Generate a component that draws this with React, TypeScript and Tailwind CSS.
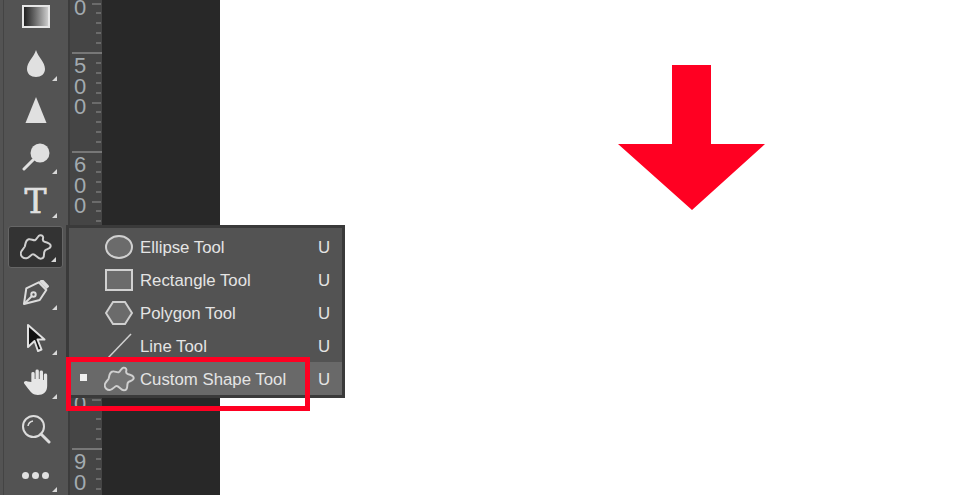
const blob =
  'M8.7 5.3C11 4.5 13.5 6.8 15.3 6C17 5.2 18 1.5 20 1.3C22.5 1 23.5 2.8 23 4.5C22.6 6 23 7.3 24.5 7.8C26.5 8.3 30.8 9.5 30.7 12C30.6 14.5 27.5 15 25.8 15.8C24 16.6 24 18.5 24 20.5C24 23 22.5 24.7 20.5 24.7C17.5 24.7 15.5 20.3 13 20.3C11 20.3 9.5 23.7 6.5 24.2C3 24.7 0.7 22 0.7 19.5C0.7 16.5 4 14.5 4.8 12.5C5.5 10.5 5.2 6.5 8.7 5.3Z';

function Corner() {
  return (
    <svg className="absolute right-[6px] bottom-[5px]" width="5" height="5" viewBox="0 0 5 5">
      <path d="M5 0V5H0Z" fill="#d8d8d8" />
    </svg>
  );
}

function ToolSlot({ className = '', active, corner, children }: { className?: string; active?: boolean; corner?: boolean; children: React.ReactNode }) {
  return (
    <div
      className={`relative flex w-[55px] shrink-0 items-center justify-center ${active ? 'h-[42px] rounded-[3px] border border-[#666] bg-[#333333]' : 'h-[44px]'} ${className}`}
    >
      {children}
      {corner && <Corner />}
    </div>
  );
}

function Toolbar() {
  return (
    <div className="flex h-full w-[70px] shrink-0 flex-col items-center overflow-hidden border-r-2 border-[#3c3c3c] bg-[#535353] pl-[3px]">
      <ToolSlot className="-mt-[6px]">
        <div className="h-[23px] w-[28px] border-2 border-[#e6e6e6] bg-gradient-to-r from-[#222] to-[#ccc]" />
      </ToolSlot>
      <ToolSlot className="mt-[4px]" corner>
        <svg width="20" height="28" viewBox="0 0 20 28">
          <path d="M10 0C12 7 19 12 19 19C19 24 15 27 10 27C5 27 1 24 1 19C1 12 8 7 10 0Z" fill="#e0e0e0" />
        </svg>
      </ToolSlot>
      <ToolSlot className="mt-[2px]">
        <svg width="22" height="26" viewBox="0 0 22 26">
          <path d="M11 0L21.5 26H0.5Z" fill="#e0e0e0" />
        </svg>
      </ToolSlot>
      <ToolSlot className="mt-[3px]" corner>
        <svg width="28" height="28" viewBox="0 0 28 28">
          <circle cx="18" cy="10" r="9.5" fill="#e0e0e0" />
          <path d="M11 17L2 26" stroke="#e0e0e0" strokeWidth="3" strokeLinecap="round" />
        </svg>
      </ToolSlot>
      <ToolSlot corner>
        <span className="font-['DejaVu_Serif',serif] text-[33px] leading-none text-[#e0e0e0] [-webkit-text-stroke:0.7px_#e0e0e0]">T</span>
      </ToolSlot>
      <ToolSlot className="mt-[3px]" active corner>
        <svg width="32" height="26" viewBox="0 0 32 26">
          <path d={blob} fill="none" stroke="#cfcfcf" strokeWidth="2" />
        </svg>
      </ToolSlot>
      <ToolSlot className="mt-[3px]" corner>
        <svg width="26" height="26" viewBox="0 0 26 26" fill="none" stroke="#dcdcdc" strokeWidth="2">
          <path d="M1 24L3.3 8.3L15.7 2.3L23.3 10L16.7 20Z" strokeLinejoin="round" />
          <path d="M1 24L9 16" />
          <circle cx="10.5" cy="14.5" r="2.2" />
          <path d="M17.7 0L25 7.7" strokeWidth="4" />
        </svg>
      </ToolSlot>
      <ToolSlot className="mt-[1px]" corner>
        <svg width="20" height="29" viewBox="0 0 20 29">
          <path d="M2 1L18.5 15.5H11.5L15.5 25.5L12 27L8.5 17L2 23Z" fill="#111" stroke="#e0e0e0" strokeWidth="2" strokeLinejoin="round" />
        </svg>
      </ToolSlot>
      <ToolSlot corner>
        <svg width="25" height="28" viewBox="0 0 21 28" preserveAspectRatio="none">
          <path
            d="M7 14V5.5a1.4 1.4 0 0 1 2.8 0V11H10.5V3a1.4 1.4 0 0 1 2.8 0V11H14V4a1.4 1.4 0 0 1 2.8 0V12H17.5V7a1.4 1.4 0 0 1 2.8 0V18C20.3 24 17 27 12.5 27C8.5 27 6.5 24 4.5 21L1 15.5C0 13.5 2.5 12 4 13.5Z"
            fill="#e6e6e6"
          />
        </svg>
      </ToolSlot>
      <ToolSlot className="mt-[3px]">
        <svg width="30" height="30" viewBox="0 0 30 30" fill="none" stroke="#dcdcdc" strokeWidth="2">
          <circle cx="12.5" cy="12.5" r="10.5" />
          <path d="M7 12A6 6 0 0 1 12 7" strokeWidth="1.5" />
          <path d="M20 20L28 28" strokeWidth="3" strokeLinecap="round" />
        </svg>
      </ToolSlot>
      <ToolSlot className="mt-[2px]" corner>
        <div className="flex gap-[3px]">
          <div className="h-[7px] w-[7px] rounded-full bg-[#e0e0e0]" />
          <div className="h-[7px] w-[7px] rounded-full bg-[#e0e0e0]" />
          <div className="h-[7px] w-[7px] rounded-full bg-[#e0e0e0]" />
        </div>
      </ToolSlot>
    </div>
  );
}

function RulerSegment({ digits }: { digits: string[] }) {
  return (
    <div className="flex h-[99px] shrink-0 justify-between border-t-2 border-[#777]">
      <div className="flex flex-col pl-[2px] pt-[2px] font-['Liberation_Sans',sans-serif] text-[22px] leading-[20.5px] text-[#a3abb0]">
        {digits.map((d, i) => (
          <span key={i}>{d}</span>
        ))}
      </div>
      <div className="flex flex-col items-end justify-between py-[8px] pr-[1px]">
        {[0, 1, 2, 3, 4, 5, 6, 7, 8].map((t) => (
          <div key={t} className={`h-[2px] bg-[#6b6b6b] ${t === 4 ? 'w-[9px]' : 'w-[5px]'}`} />
        ))}
      </div>
    </div>
  );
}

function Ruler() {
  return (
    <div className="flex h-full w-[32px] shrink-0 flex-col overflow-hidden bg-[#454545] pl-[2px]">
      <div className="-mt-[47px] flex flex-col">
        <RulerSegment digits={['\u00a0', '\u00a0', '0']} />
        <RulerSegment digits={['5', '0', '0']} />
        <RulerSegment digits={['6', '0', '0']} />
        <RulerSegment digits={['7', '0', '0']} />
        <RulerSegment digits={['8', '0', '0']} />
        <RulerSegment digits={['9', '0', '0']} />
      </div>
    </div>
  );
}

function MenuRow({ label, icon, active }: { label: string; icon: React.ReactNode; active?: boolean }) {
  return (
    <div className={`flex h-[33px] items-center ${active ? 'bg-[#696969]' : ''}`}>
      <div className="flex w-[24px] justify-center">
        {active && <div className="mb-[3px] h-[7px] w-[7px] bg-[#f0f0f0]" />}
      </div>
      <div className="flex w-[42px] justify-center pl-[6px]">{icon}</div>
      <span className="flex-1 pl-[3px] pt-[2px] text-[16.8px] text-[#e4e4e4]">{label}</span>
      <span className="w-[24px] pt-[2px] text-[16.8px] text-[#e4e4e4]">U</span>
    </div>
  );
}

function ShapeMenu() {
  return (
    <div className="absolute left-[66px] top-[225px] w-[279px] border-[3px] border-[#3a3a3a] bg-[#535353] pt-[2px] pl-[2px] font-['Liberation_Sans',sans-serif]">
      <MenuRow
        label="Ellipse Tool"
        icon={
          <svg width="28" height="24" viewBox="0 0 28 24">
            <ellipse cx="14" cy="12" rx="13" ry="11" fill="#6b6b6b" stroke="#d0d0d0" strokeWidth="2" />
          </svg>
        }
      />
      <MenuRow
        label="Rectangle Tool"
        icon={
          <svg width="28" height="22" viewBox="0 0 28 22">
            <rect x="1" y="1" width="26" height="20" fill="#6b6b6b" stroke="#d0d0d0" strokeWidth="2" />
          </svg>
        }
      />
      <MenuRow
        label="Polygon Tool"
        icon={
          <svg width="28" height="24" viewBox="0 0 28 24">
            <path d="M8 1H20L27 12L20 23H8L1 12Z" fill="#6b6b6b" stroke="#d0d0d0" strokeWidth="2" />
          </svg>
        }
      />
      <MenuRow
        label="Line Tool"
        icon={
          <svg width="28" height="26" viewBox="0 0 28 26">
            <path d="M3 25L26 1" stroke="#d0d0d0" strokeWidth="1.5" />
          </svg>
        }
      />
      <MenuRow
        active
        label="Custom Shape Tool"
        icon={
          <svg width="31" height="26" viewBox="0 0 32 26">
            <path d={blob} fill="#757575" stroke="#d0d0d0" strokeWidth="2" />
          </svg>
        }
      />
    </div>
  );
}

export default function App() {
  return (
    <div className="relative flex h-[495px] w-[954px] overflow-hidden bg-white">
      <Toolbar />
      <Ruler />
      <div className="h-full w-[118px] shrink-0 bg-[#282828]" />
      <div className="flex-1 pl-[398px] pt-[65px]">
        <svg width="147" height="145" viewBox="0 0 147 145">
          <path d="M54 0H93V79H147L74 145L0 79H54Z" fill="#ff0022" />
        </svg>
      </div>
      <ShapeMenu />
      <div className="absolute left-[66px] top-[357px] h-[54px] w-[244px] border-[5px] border-[#ff0022]" />
      <div className="absolute left-[3px] top-0 h-full w-[1px] bg-[#444]" />
    </div>
  );
}
